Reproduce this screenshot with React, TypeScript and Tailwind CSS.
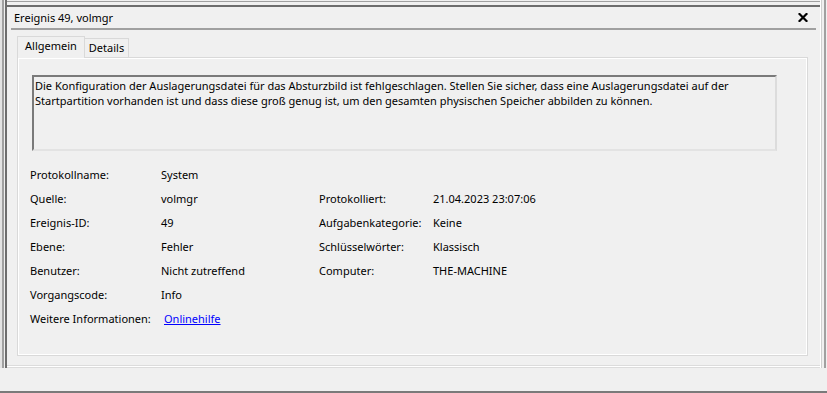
const rows: [string, string, string?, string?][] = [
  ["Protokollname:", "System"],
  ["Quelle:", "volmgr", "Protokolliert:", "21.04.2023 23:07:06"],
  ["Ereignis-ID:", "49", "Aufgabenkategorie:", "Keine"],
  ["Ebene:", "Fehler", "Schlüsselwörter:", "Klassisch"],
  ["Benutzer:", "Nicht zutreffend", "Computer:", "THE-MACHINE"],
  ["Vorgangscode:", "Info"],
];

function CloseIcon() {
  return (
    <svg width="10" height="9" viewBox="0 0 10 9">
      <path d="M1.5 1 L8.5 8 M8.5 1 L1.5 8" stroke="#000" strokeWidth="2.2" strokeLinecap="square" />
    </svg>
  );
}

export default function App() {
  return (
    <div className="w-[827px] h-[393px] bg-[#f0f0f0] flex flex-col overflow-hidden font-['Noto_Sans',sans-serif] text-[11px] text-black">
      <div className="flex h-[368px]">
        {/* left frame edge */}
        <div className="flex">
          <div className="w-[2px] bg-[#e3e3e3]" />
          <div className="w-[2px] bg-[#a0a0a0]" />
          <div className="w-px bg-[#f0f0f0]" />
          <div className="w-[2px] bg-[#6d6d6d]" />
        </div>

        <div className="flex-1 flex flex-col min-w-0">
          <div className="mt-px h-px bg-[#a0a0a0]" />
          <div className="mt-[3px] h-[2px] bg-[#6d6d6d]" />

          <div className="h-[21px] flex items-center justify-between pl-[7px] pr-[12px]">
            <span className="leading-[15px]">Ereignis 49, volmgr</span>
            <CloseIcon />
          </div>
          <div className="mx-[4px] h-[2px] bg-[#a0a0a0]" />

          <div className="mt-[6px] ml-[10px] mr-[12px] flex flex-col">
            {/* tabs */}
            <div className="flex items-end h-[21px] relative z-10">
              <div className="h-[22px] w-[68px] border-t border-l border-r border-[#d9d9d9] bg-[#f0f0f0] flex items-center justify-center pb-[2px] -mb-px">
                Allgemein
              </div>
              <div className="h-[19px] w-[44px] border-t border-r border-[#d9d9d9] bg-[#f0f0f0] flex items-center justify-center">
                Details
              </div>
            </div>

            {/* panel */}
            <div className="h-[299px] border border-[#d9d9d9] shadow-[inset_1px_1px_0_#ffffff,inset_-1px_-1px_0_#ffffff] flex flex-col">
              <div className="mt-[17px] ml-[14px] w-[745px] h-[76px] border-2 border-t-[#7a7a7a] border-l-[#7a7a7a] border-b-[#e3e3e3] border-r-[#dcdcdc] pt-[1px] px-[1px] leading-[15px]">
                Die Konfiguration der Auslagerungsdatei für das Absturzbild ist fehlgeschlagen. Stellen Sie sicher, dass eine Auslagerungsdatei auf der
                Startpartition vorhanden ist und dass diese groß genug ist, um den gesamten physischen Speicher abbilden zu können.
              </div>

              <div className="mt-[12px] ml-[12px] grid grid-cols-[131px_158px_114px_1fr] auto-rows-[24px] items-center">
                {rows.map(([a, b, c, d]) => (
                  <div key={a} className="contents">
                    <span>{a}</span>
                    <span>{b}</span>
                    <span>{c ?? ""}</span>
                    <span>{d ?? ""}</span>
                  </div>
                ))}
                <span>Weitere Informationen:</span>
                <span className="pl-[3px]">
                  <a className="text-[#0000ff] underline">Onlinehilfe</a>
                </span>
              </div>
            </div>
          </div>

          <div className="flex-1" />
          <div className="h-px bg-[#dcdcdc]" />
          <div className="h-px bg-white" />
          <div className="h-px bg-[#dcdcdc]" />
        </div>

        {/* right frame edge */}
        <div className="flex">
          <div className="w-px bg-white" />
          <div className="w-px bg-[#d0d0d0]" />
          <div className="w-[2px] bg-[#f0f0f0]" />
          <div className="w-[2px] bg-[#a0a0a0]" />
          <div className="w-px bg-[#f0f0f0]" />
        </div>
      </div>
      <div className="flex-1" />
      <div className="h-[2px] bg-[#7a7a7a]" />
    </div>
  );
}
